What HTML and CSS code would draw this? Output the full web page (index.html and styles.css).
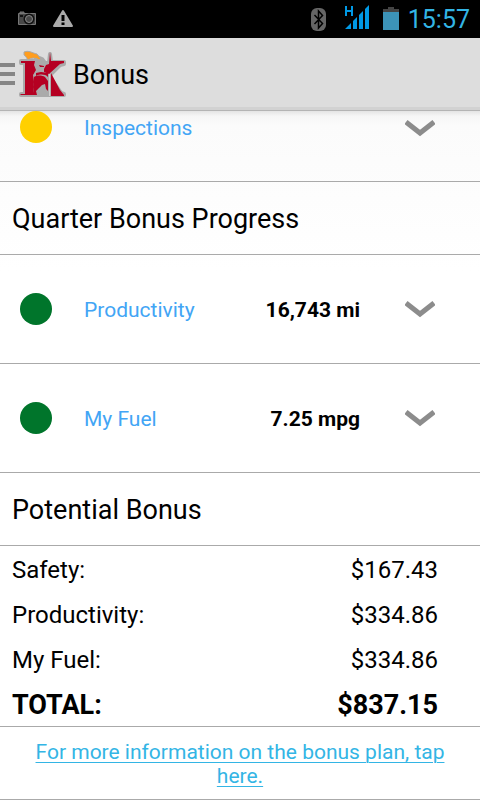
FILE: index.html
```html
<!DOCTYPE html>
<html lang="en">
<head>
<meta charset="utf-8">
<meta name="viewport" content="width=device-width, initial-scale=1">
<title>Bonus</title>
<link rel="stylesheet" href="styles.css">
</head>
<body>
<div class="status">
  <svg class="status-left" width="58" height="24" viewBox="0 0 58 24" aria-hidden="true">
    <path fill="#484848" stroke="#777" d="M.5 6.500h17v11h-17zM2 5h4v1H2z"/>
    <circle cx="11" cy="12" r="4.500" fill="#222" stroke="#111" stroke-width="2"/>
    <circle cx="11" cy="12" r="3.500" fill="#484848" stroke="#888"/>
    <path fill="#111" d="M2 8h3v2H2z"/>
    <path fill="#aaa" stroke="#aaa" stroke-width="2" stroke-linejoin="round" d="M45 4l9 15H36z"/>
    <path fill="#000" d="M43.500 8h3v6h-3zM43.500 15.500h3v2.500h-3z"/>
  </svg>
  <div class="status-right">
    <svg width="88" height="26" viewBox="0 0 88 26" aria-hidden="true">
      <rect y="2" width="15" height="23" rx="6" fill="#666"/>
      <path fill="none" stroke="#000" stroke-width="1.500" d="M3.500 9l8 8.500-4 4.500V5l4 4.500-8 8.500"/>
      <path fill="none" stroke="#0099e5" stroke-width="2" d="M35 0v10M41 0v10M35 5h6"/>
      <path fill="#0099e5" d="M34 23l6-6v6zM42 15l4-4v12h-4zM48 9l4-4v18h-4zM54 3l4-4v24h-4z"/>
      <path fill="#444" d="M77 1h6v2h5v4H72V3h5z"/>
      <path fill="#3c93b8" d="M72 6h16v18H72z"/>
    </svg>
    <span class="clock">15:57</span>
  </div>
</div>
<header class="appbar">
  <button class="menu" aria-label="Open menu">
    <svg width="15" height="22" viewBox="0 0 15 22" aria-hidden="true">
      <path fill="#858585" d="M0 0h15v4H0zM0 9h15v4H0zM0 18h15v4H0z"/>
    </svg>
  </button>
  <svg class="logo" width="48" height="48" viewBox="0 0 48 48" aria-hidden="true">
    <path fill="#aaa" stroke="#aaa" stroke-width="4" stroke-linejoin="round" d="M2 11h14l2-4 5 2 3 4h4l1-9 1 8h13v2l-4 1-11 11 12 17 3 1v1H2v-1h4V13H2z"/>
    <path fill="#b50022" d="M2 11h14l-1 4 2 5-3 5 1 7-1 5 1 6 1 2H1.500v-1H6V13H2z"/>
    <path fill="#b50022" d="M25 19l2-4 3-1 1-12 1 9h13v2l-4 1-11 10-5-2z"/>
    <path fill="#b50022" d="M15 27c3-2 8-2 11 0l3 4v10l-2-2-1-5-3 1-3 3-3 3 1 4h-3l-1-8z"/>
    <path fill="#b50022" d="M17 23l5-1 7 1v4c-3-3-8-3-12-1z"/>
    <path fill="#b50022" d="M32 23l9 17 4 5v1H32z"/>
    <path fill="#b50022" d="M20 15l5 1v1h-4z"/>
    <path fill="none" stroke="#d0d0d0" d="M30.500 24v22"/>
    <path fill="#ff9d1e" stroke="#aaa" d="M5 2c5-2 8 1 13 2l4 5-2 1c-4-3-8-2-11 0-1-1-2-4-4-5z"/>
  </svg>
  <h1 class="title">Bonus</h1>
</header>
<main class="content">
  <section>
    <button class="item item-first">
      <span class="dot dot-yellow"></span>
      <span class="name">Inspections</span>
      <span class="value"></span>
      <svg class="chevron" width="30" height="17" viewBox="0 0 30 17" aria-hidden="true"><path d="M1 2l14 11L29 2"/></svg>
    </button>
  </section>
  <section>
    <h2 class="heading">Quarter Bonus Progress</h2>
    <button class="item">
      <span class="dot dot-green"></span>
      <span class="name">Productivity</span>
      <span class="value">16,743 mi</span>
      <svg class="chevron" width="30" height="17" viewBox="0 0 30 17" aria-hidden="true"><path d="M1 2l14 11L29 2"/></svg>
    </button>
    <button class="item">
      <span class="dot dot-green"></span>
      <span class="name">My Fuel</span>
      <span class="value">7.25 mpg</span>
      <svg class="chevron" width="30" height="17" viewBox="0 0 30 17" aria-hidden="true"><path d="M1 2l14 11L29 2"/></svg>
    </button>
  </section>
  <section>
    <h2 class="heading">Potential Bonus</h2>
    <table class="amounts">
      <tbody>
        <tr><th scope="row">Safety:</th><td>$167.43</td></tr>
        <tr><th scope="row">Productivity:</th><td>$334.86</td></tr>
        <tr><th scope="row">My Fuel:</th><td>$334.86</td></tr>
      </tbody>
      <tfoot>
        <tr><th scope="row">TOTAL:</th><td>$837.15</td></tr>
      </tfoot>
    </table>
    <p class="more"><a href="#plan">For more information on the bonus plan, tap here.</a></p>
  </section>
</main>
</body>
</html>
```
FILE: styles.css
```css
* {
  box-sizing: border-box;
}

body {
  margin: 0;
  background: #fff;
  color: #000;
  font-family: Roboto, sans-serif;
}

button {
  border: 0;
  padding: 0;
  background: none;
  color: inherit;
  font: inherit;
  text-align: left;
}

.status {
  display: flex;
  align-items: center;
  justify-content: space-between;
  height: 38px;
  padding: 0 10px 0 18px;
  background: #000;
}

.status-right {
  display: flex;
  align-items: center;
  gap: 9px;
}

.status-right svg {
  overflow: visible;
}

.clock {
  padding-top: 2px;
  color: #33b5e5;
  font-size: 25px;
  line-height: 36px;
}

.appbar {
  display: flex;
  align-items: center;
  height: 73px;
  border-bottom: 1px solid #b4b4b4;
  background: linear-gradient(#ddd 69px, #d2d2d2 69px);
}

.menu,
.menu svg,
.logo {
  display: block;
}

.logo {
  margin: 0 6px 0 4px;
}

.title {
  margin: 0;
  padding-top: 2px;
  font-size: 27px;
  font-weight: 400;
  line-height: 32px;
}

.content {
  background: linear-gradient(#e4e4e4, #f6f6f6 5px, #fbfbfb 14px, #fff 160px);
}

.heading {
  margin: 0;
  padding: 2px 12px 0;
  border-bottom: 1px solid #aaa;
  font-size: 27px;
  font-weight: 400;
  line-height: 70px;
}

.item {
  display: grid;
  grid-template-columns: 32px 1fr auto 30px;
  align-items: center;
  width: 100%;
  padding: 36px 45px 36px 20px;
  border-bottom: 1px solid #aaa;
  font-size: 21px;
  line-height: 34px;
}

.item-first {
  padding-top: 0;
}

.item-first .dot {
  align-self: start;
}

.dot {
  width: 32px;
  height: 32px;
  border-radius: 50%;
}

.dot-yellow {
  background: #ffd000;
}

.dot-green {
  background: #00752b;
}

.name {
  padding-top: 2px;
  padding-left: 32px;
  color: #42a5f5;
}

.item-first .name {
  padding-top: 0;
}

.value {
  padding-top: 2px;
  padding-right: 45px;
  font-weight: 700;
}

.chevron {
  display: block;
  fill: none;
  stroke: #8c8c8c;
  stroke-width: 5;
}

.amounts {
  width: 100%;
  border-bottom: 1px solid #aaa;
  border-collapse: separate;
  border-spacing: 0;
  font-size: 24px;
  line-height: 41px;
}

.amounts th,
.amounts td {
  padding: 4px 42px 0 12px;
  font-weight: 400;
  text-align: left;
}

.amounts td {
  text-align: right;
}

.amounts tfoot th,
.amounts tfoot td {
  font-size: 27px;
  font-weight: 700;
}

.more {
  margin: 0;
  padding: 13px 30px 11px;
  border-bottom: 1px solid #aaa;
  font-size: 21px;
  line-height: 24px;
  text-align: center;
}

.more a {
  color: #33b5e5;
  text-decoration-thickness: 1px;
  text-underline-offset: 3px;
}
```
